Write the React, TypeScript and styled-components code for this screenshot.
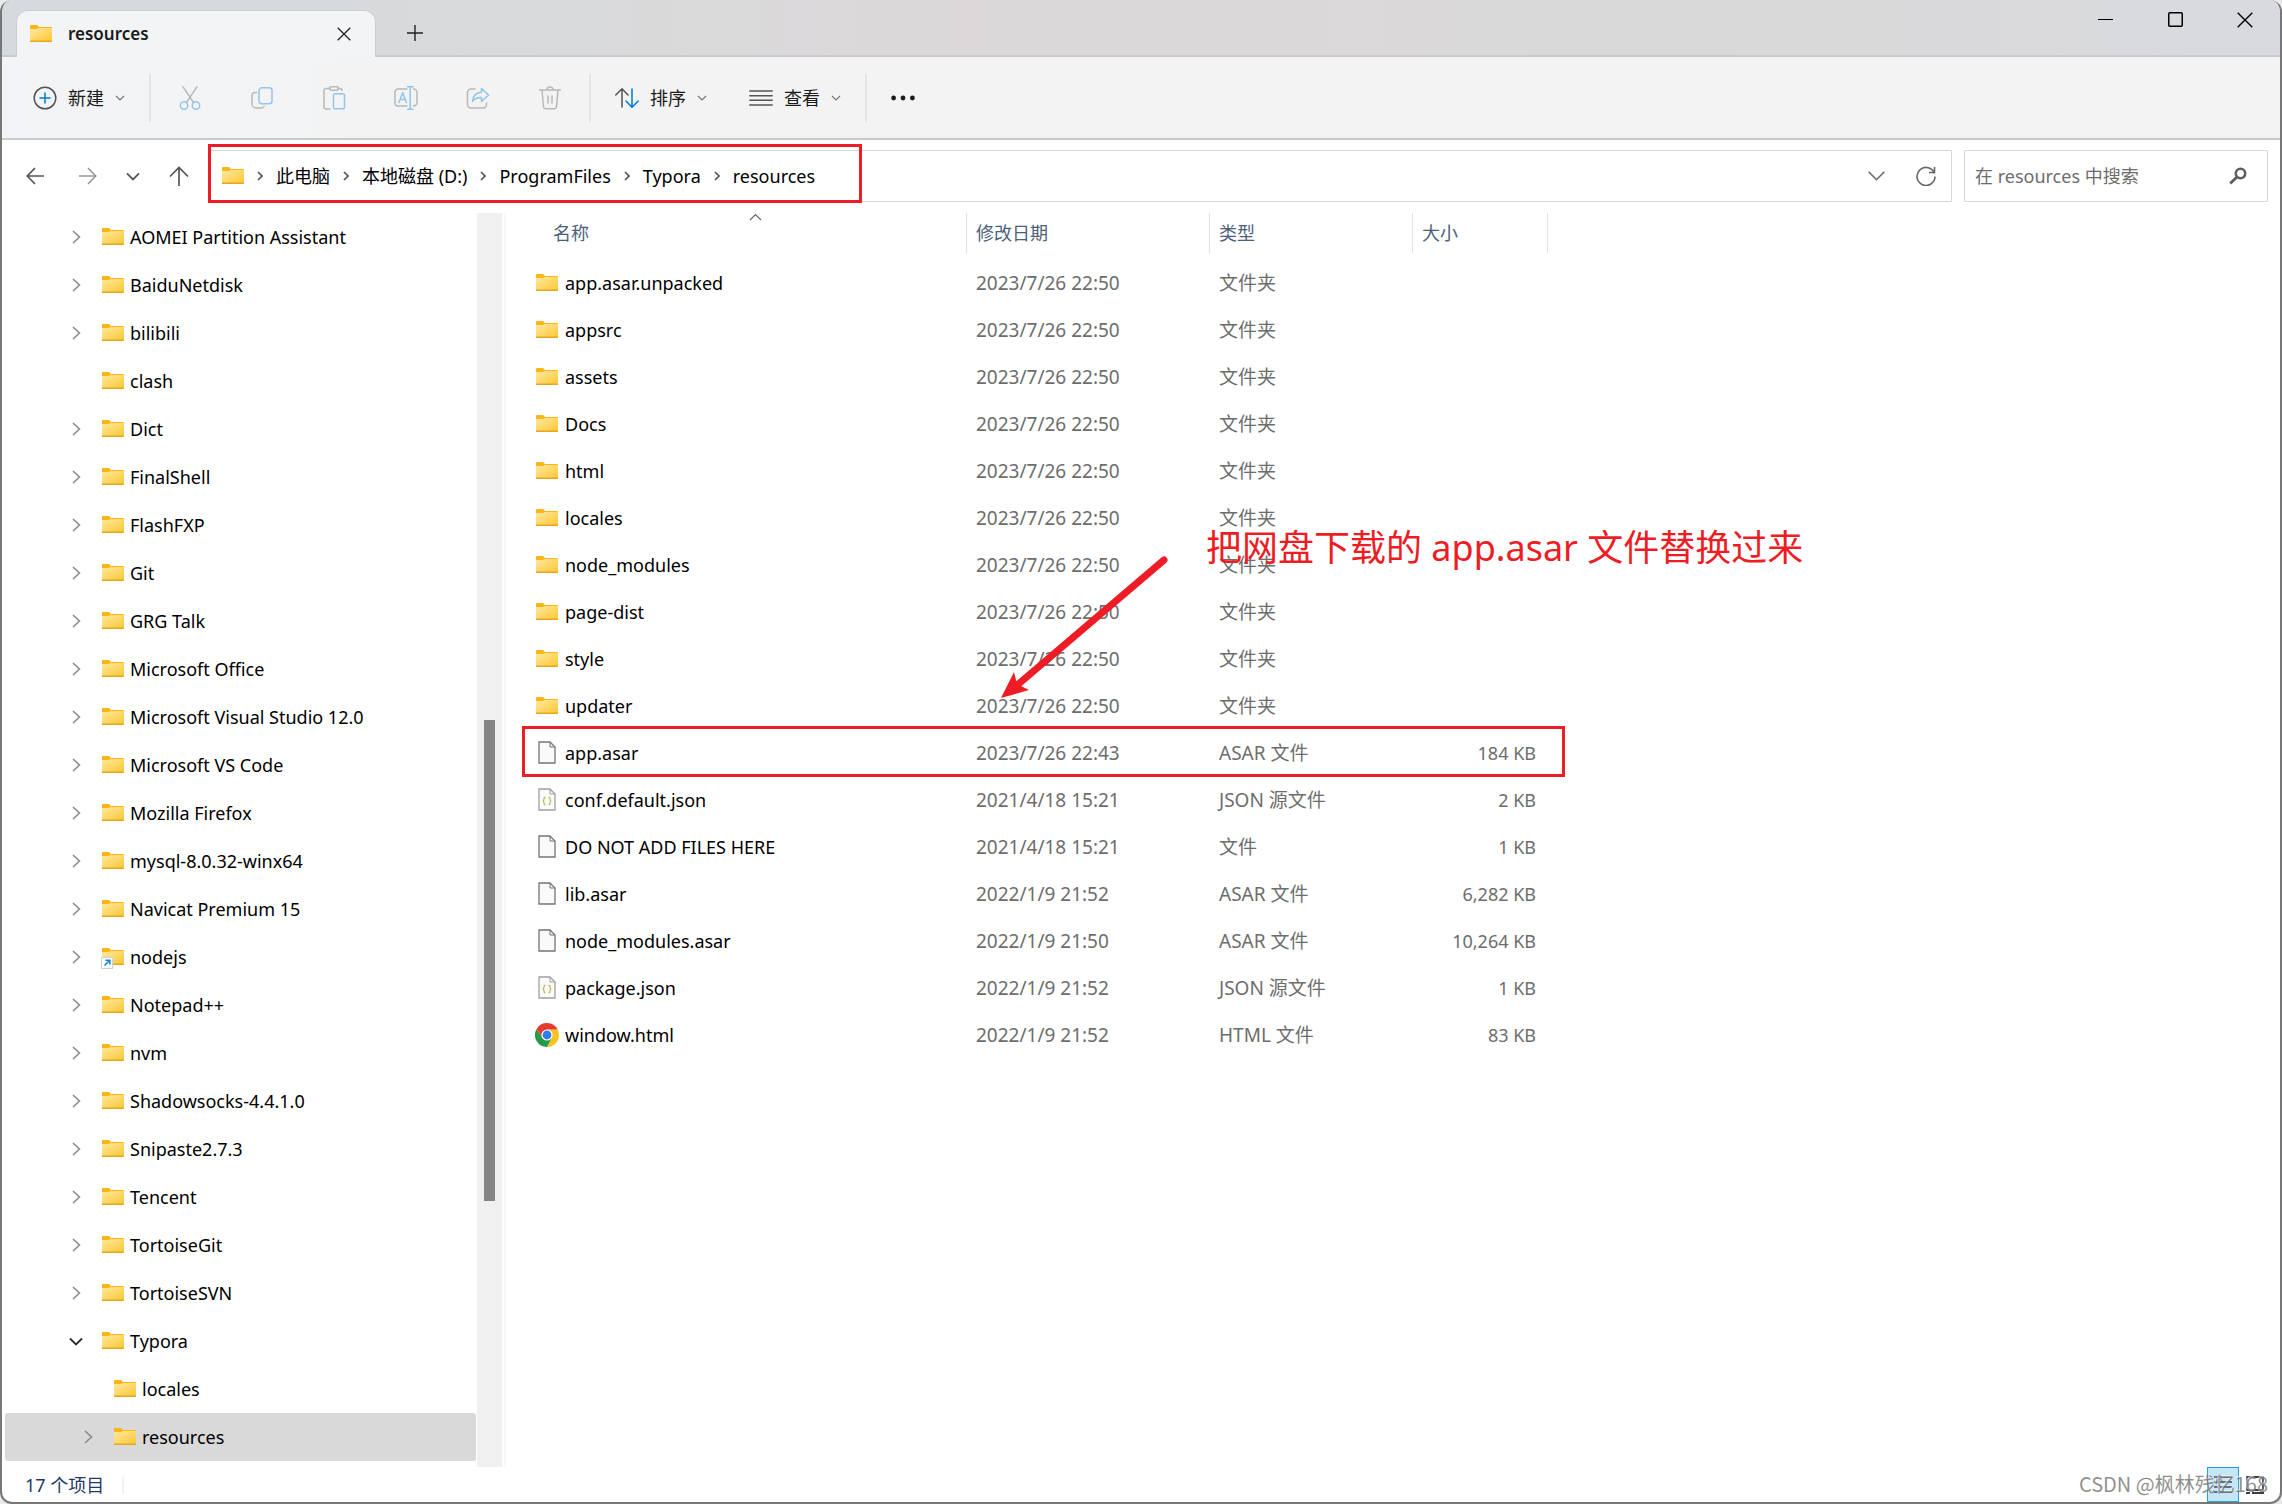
import React from "react";
import styled, { createGlobalStyle, css } from "styled-components";

const FONT = `"Noto Sans", "Noto Sans CJK SC", sans-serif`;
const RED = "#ee1c25";

const GlobalStyle = createGlobalStyle`
  *, *::before, *::after { box-sizing: border-box; }
  body {
    margin: 0;
    background: #e9e9e9;
    font-family: ${FONT};
    font-size: 18px;
    line-height: 24px;
    color: #000;
  }
  button, input { font: inherit; color: inherit; }
  ul, ol { list-style: none; margin: 0; padding: 0; }
`;

const plainButton = css`
  display: flex;
  align-items: center;
  padding: 0;
  border: 0;
  background: transparent;
  text-align: left;
`;

const Window = styled.div`
  position: relative;
  display: flex;
  flex-direction: column;
  height: 100vh;
  min-height: 900px;
  overflow: hidden;
  background: #fff;
  border: 2px solid #777;
  border-top: 0;
  border-radius: 12px;
`;

/* ---------- title bar ---------- */

const TitleBar = styled.header`
  display: flex;
  flex: none;
  height: 57px;
  padding-left: 14px;
  border-bottom: 2px solid #cbcacd;
  background: linear-gradient(90deg, #d5dadf 0%, #d8dadb 22%, #dcd8da 42%, #d9d9d9 78%, #d9dadf 100%);
`;

const Tab = styled.div`
  display: flex;
  align-items: center;
  align-self: flex-start;
  width: 360px;
  height: 47px;
  margin-top: 10px;
  padding: 0 19px 0 13px;
  border: 1px solid #cdced2;
  border-bottom: 0;
  border-radius: 12px 12px 0 0;
  background: #f3f4f6;
`;

const TabTitle = styled.span`
  flex: 1;
  padding-left: 16px;
  font-size: 17px;
  font-weight: 600;
  color: #1b1b1b;
`;

const GlyphButton = styled.button`
  ${plainButton}
  justify-content: center;
  width: 24px;
  height: 24px;
`;

const NewTab = styled(GlyphButton)`
  width: 78px;
  height: 46px;
  margin-top: 10px;
`;

const Controls = styled.div`
  display: flex;
  margin-left: auto;
`;

const ControlButton = styled.button`
  ${plainButton}
  justify-content: center;
  width: 70px;
  height: 39px;
`;

/* ---------- command bar ---------- */

const CommandBar = styled.div`
  display: flex;
  flex: none;
  align-items: center;
  height: 83px;
  padding-left: 10px;
  border-bottom: 2px solid #c9c8ca;
  background: linear-gradient(90deg, #f2f4f7 0%, #f3f3f3 20%, #f3f3f3 100%);
`;

const CommandButton = styled.button`
  ${plainButton}
  height: 48px;
  padding: 0 21px;
  gap: 11px;
  color: #1b1b1b;
`;

const CommandIcon = styled.button`
  ${plainButton}
  justify-content: center;
  width: 72px;
  height: 48px;
`;

const Divider = styled.span`
  width: 2px;
  height: 48px;
  margin: 0 3px;
  background: #e3e3e4;
`;

/* ---------- address row ---------- */

const AddressRow = styled.div`
  display: flex;
  flex: none;
  height: 73px;
  padding: 10px 12px 11px 6px;
`;

const NavButton = styled.button<{ $width: number }>`
  ${plainButton}
  justify-content: center;
  width: ${(p) => p.$width}px;
`;

const AddressField = styled.div`
  position: relative;
  display: flex;
  flex: 1;
  align-items: center;
  margin: 0 12px 0 3px;
  padding: 0 13px 0 11px;
  border: 1px solid #d9d9d9;
`;

const Crumbs = styled.ol`
  display: flex;
  flex: 1;
  align-items: center;
`;

const Crumb = styled.li`
  display: flex;
  align-items: center;
`;

const CrumbLink = styled.a`
  color: #000;
  text-decoration: none;
  white-space: nowrap;
`;

const CrumbChevron = styled.svg`
  margin: 0 13px;
`;

const CrumbHighlight = styled.span`
  position: absolute;
  left: -3px;
  top: -7px;
  width: 654px;
  height: 59px;
  border: 3px solid ${RED};
  pointer-events: none;
`;

const FieldButton = styled(GlyphButton)`
  margin-left: 26px;
`;

const SearchField = styled.label`
  display: flex;
  align-items: center;
  width: 304px;
  padding: 0 20px 0 10px;
  border: 1px solid #d9d9d9;
`;

const SearchInput = styled.input`
  flex: 1;
  min-width: 0;
  padding: 0;
  border: 0;
  outline: 0;
  background: transparent;
  &::placeholder { color: #6d6d6d; opacity: 1; }
`;

/* ---------- body ---------- */

const Body = styled.div`
  display: flex;
  flex: 1;
  min-height: 0;
`;

const Tree = styled.nav`
  flex: none;
  width: 475px;
  padding: 0 1px 0 3px;
  overflow: hidden;
`;

const TreeRow = styled.button<{ $depth: number; $selected?: boolean }>`
  ${plainButton}
  width: 100%;
  height: 48px;
  padding-left: ${(p) => 61 + p.$depth * 12}px;
  border-radius: 3px;
  background: ${(p) => (p.$selected ? "#d9d9d9" : "transparent")};
`;

const TreeChevron = styled.span`
  display: flex;
  justify-content: center;
  width: 20px;
  margin-right: 16px;
`;

const TreeLabel = styled.span`
  padding-left: 6px;
  white-space: nowrap;
`;

const ScrollTrack = styled.div`
  flex: none;
  width: 25px;
  background: #f0f0f0;
`;

const ScrollThumb = styled.div`
  width: 11px;
  height: 481px;
  margin: 507px 0 0 7px;
  background: #858585;
`;

const Files = styled.main`
  position: relative;
  flex: 1;
  min-width: 0;
  margin-left: 2px;
  border-left: 2px solid #f7f7f7;
`;

const FileTable = styled.table`
  width: 1042px;
  table-layout: fixed;
  border-collapse: collapse;
`;

const HeadCell = styled.th`
  height: 46px;
  padding: 0 0 6px;
  font-weight: 400;
  text-align: left;
`;

const HeadLabel = styled.div<{ $indent: number }>`
  position: relative;
  height: 40px;
  padding-left: ${(p) => p.$indent}px;
  line-height: 40px;
  border-right: 1px solid #e2e2e2;
  color: #4c607a;
`;

const SortMark = styled.svg`
  position: absolute;
  left: 243px;
  top: 0;
`;

const Cell = styled.td<{ $align?: string }>`
  height: 47px;
  padding: 0 12px 0 9px;
  font-size: ${(p) => (p.$align ? 18 : 19)}px;
  text-align: ${(p) => p.$align || "left"};
  white-space: nowrap;
  color: #6d6d6d;
`;

const NameCell = styled(Cell)`
  padding-left: 29px;
  font-size: 18px;
  color: #000;
`;

const NameLine = styled.span`
  display: flex;
  align-items: center;
  gap: 6px;
`;

const IconSlot = styled.span`
  display: flex;
  justify-content: center;
  width: 24px;
`;

/* ---------- annotations ---------- */

const RowHighlight = styled.div`
  position: absolute;
  left: 16px;
  top: 513px;
  width: 1043px;
  height: 51px;
  border: 3px solid ${RED};
  pointer-events: none;
`;

const Note = styled.p`
  position: absolute;
  left: 700px;
  top: 311px;
  margin: 0;
  font-size: 36px;
  line-height: 48px;
  white-space: nowrap;
  color: ${RED};
`;

const Arrow = styled.svg`
  position: absolute;
  left: 490px;
  top: 340px;
`;

/* ---------- status bar ---------- */

const StatusBar = styled.footer`
  display: flex;
  flex: none;
  align-items: center;
  height: 35px;
  padding: 0 9px 0 23px;
`;

const StatusText = styled.span`
  padding-right: 18px;
  border-right: 2px solid #f3f3f3;
  line-height: 18px;
  color: #1f3864;
`;

const ViewButton = styled.button<{ $active?: boolean }>`
  ${plainButton}
  justify-content: center;
  width: 32px;
  height: 35px;
  border: 1px solid ${(p) => (p.$active ? "#26a0da" : "transparent")};
  background: ${(p) => (p.$active ? "#c5e6f6" : "transparent")};
`;

const ViewButtons = styled.div`
  display: flex;
  margin-left: auto;
`;

const Watermark = styled.span`
  position: absolute;
  right: 12px;
  bottom: 4px;
  font-family: "Noto Sans CJK SC", sans-serif;
  font-size: 20px;
  line-height: 28px;
  color: rgba(112, 112, 112, 0.78);
  text-shadow: -1px -1px 0 rgba(255, 255, 255, 0.6);
  pointer-events: none;
`;

/* ---------- icons ---------- */

const FolderIcon = ({ shortcut }: { shortcut?: boolean }) => (
  <svg width="22" height="22" viewBox="0 0 22 22" overflow="visible" aria-hidden="true">
    <defs>
      <linearGradient id="folderFace" x1="0" y1="0" x2="1" y2="1">
        <stop offset="0" stopColor="#ffe8a3" />
        <stop offset="1" stopColor="#fec832" />
      </linearGradient>
    </defs>
    <path d="M0 3a1 1 0 0 1 1-1h6l2 2h12a1 1 0 0 1 1 1v5H0z" fill="#f9b616" />
    <path d="M0 6h7l1.500-1H22v13H0z" fill="url(#folderFace)" />
    <path d="M0 17.500h22v1a.5.5 0 0 1-.5.5H.5a.5.5 0 0 1-.5-.5z" fill="#e8a520" />
    {shortcut && (
      <g>
        <rect x="-.5" y="11.500" width="11" height="11" fill="#fff" stroke="#c9d3e6" />
        <path d="M2.500 19.500 7.500 14.500M3.500 14.200H7.800V18.500" fill="none" stroke="#1183d8" strokeWidth="1.500" />
      </g>
    )}
  </svg>
);

const FileIcon = ({ json }: { json?: boolean }) => (
  <svg width="18" height="23" viewBox="0 0 18 23" fill="none" aria-hidden="true">
    <path d="M1 1h11l5 5v16H1z" fill="#fafafa" stroke={json ? "#a0a0a0" : "#757575"} strokeWidth="1.300" />
    <path d="M12 1v5h5" stroke={json ? "#a0a0a0" : "#757575"} />
    {json && (
      <path
        d="M7.500 9c-1.500 0-1.500.6-1.500 1.800 0 1.400 0 2-1.200 2.200C6 13.200 6 14 6 15.300 6 16.500 6 17 7.500 17M10.500 9c1.500 0 1.500.6 1.500 1.800 0 1.400 0 2 1.200 2.200-1.200.2-1.200 1-1.200 2.300 0 1.200 0 1.700-1.500 1.700"
        stroke="#b9b84a"
        strokeWidth="1.200"
      />
    )}
  </svg>
);

const ChromeIcon = () => (
  <svg width="24" height="24" viewBox="0 0 24 24" aria-hidden="true">
    <path d="M12 6.500H22.650A12 12 0 0 1 12 24L16.800 14.700z" fill="#fcc31e" />
    <path d="M7.200 14.700 1.600 6A12 12 0 0 0 12 24l4.800-9.300z" fill="#229a48" />
    <path d="M12 6.500H22.650A12 12 0 0 0 1.600 6l5.600 8.700z" fill="#e33b2e" />
    <circle cx="12" cy="12" r="5.600" fill="#fff" />
    <circle cx="12" cy="12" r="4.400" fill="#2f7cf0" />
  </svg>
);

const SmallChevron = () => (
  <svg width="10" height="6" viewBox="0 0 10 6" fill="none" stroke="#777" strokeWidth="1.200" aria-hidden="true">
    <path d="m1 1 4 4 4-4" />
  </svg>
);

const RightChevron = () => (
  <svg width="9" height="14" viewBox="0 0 9 14" fill="none" stroke="#8b8b8b" strokeWidth="1.600" aria-hidden="true">
    <path d="m1 1 6.500 6L1 13" />
  </svg>
);

const OpenChevron = () => (
  <svg width="14" height="9" viewBox="0 0 14 9" fill="none" stroke="#2b2b2b" strokeWidth="1.800" aria-hidden="true">
    <path d="m1 1.500 6 6 6-6" />
  </svg>
);

const GREY = "#b9b9b9";
const BLUE = "#93c5ec";

const Icon24 = ({ children }: { children: React.ReactNode }) => (
  <svg
    width="24"
    height="24"
    viewBox="0 0 24 24"
    fill="none"
    strokeWidth="1.500"
    strokeLinecap="round"
    strokeLinejoin="round"
    aria-hidden="true"
  >
    {children}
  </svg>
);

const commandIcons = [
  {
    label: "剪切",
    icon: (
      <Icon24>
        <path d="M5 .8 15.600 16.500M19 .8 8.400 16.500" stroke={GREY} />
        <circle cx="6" cy="19.500" r="3.700" stroke={BLUE} />
        <circle cx="18" cy="19.500" r="3.700" stroke={BLUE} />
      </Icon24>
    ),
  },
  {
    label: "复制",
    icon: (
      <Icon24>
        <path d="M6.500 6.500H5a3 3 0 0 0-3 3V18a4 4 0 0 0 4 4h5.500a3 3 0 0 0 2.500-1.500" stroke={GREY} />
        <rect x="9" y="1.800" width="13" height="16" rx="3" stroke={BLUE} />
      </Icon24>
    ),
  },
  {
    label: "粘贴",
    icon: (
      <Icon24>
        <path d="M8 2.500H4a2 2 0 0 0-2 2V21a2 2 0 0 0 2 2h4M16 2.500h2a2 2 0 0 1 2 2" stroke={GREY} />
        <rect x="7.500" y=".8" width="9" height="3.500" rx="1.700" stroke={GREY} />
        <rect x="11.500" y="7.800" width="11" height="15" rx="1.500" stroke={BLUE} />
      </Icon24>
    ),
  },
  {
    label: "重命名",
    icon: (
      <Icon24>
        <path d="M13 3H4a3 3 0 0 0-3 3v11a3 3 0 0 0 3 3h9M19.500 3a3.500 3.500 0 0 1 3.500 3.500v10a3.500 3.500 0 0 1-3.500 3.500" stroke={GREY} />
        <path d="M5 16.500 8.700 6.500l3.700 10M6.300 13.500h4.800M13.500.8h5.500M16.200.8v22.400M13.500 23.200h5.500" stroke={BLUE} />
      </Icon24>
    ),
  },
  {
    label: "共享",
    icon: (
      <Icon24>
        <path d="M9 3H5a3.500 3.500 0 0 0-3.500 3.500v12A3.500 3.500 0 0 0 5 22h12a3.500 3.500 0 0 0 3.500-3.500V17" stroke={GREY} />
        <path d="M15.500 2.500 22.500 9l-7 6.500v-4c-4.500-.2-7 1-9 4 .3-5.500 3.500-8.800 9-9.200z" stroke={BLUE} />
      </Icon24>
    ),
  },
  {
    label: "删除",
    icon: (
      <Icon24>
        <path d="M1.500 4h21M9 4c0-4 6-4 6 0M4 4l1.500 16.500A2.500 2.500 0 0 0 8 22.800h8a2.500 2.500 0 0 0 2.500-2.300L20 4M10 10v7M14 10v7" stroke={GREY} />
      </Icon24>
    ),
  },
];

/* ---------- data ---------- */

type TreeItem = { name: string; depth?: number; leaf?: boolean; open?: boolean; shortcut?: boolean; selected?: boolean };

const tree: TreeItem[] = [
  { name: "AOMEI Partition Assistant" },
  { name: "BaiduNetdisk" },
  { name: "bilibili" },
  { name: "clash", leaf: true },
  { name: "Dict" },
  { name: "FinalShell" },
  { name: "FlashFXP" },
  { name: "Git" },
  { name: "GRG Talk" },
  { name: "Microsoft Office" },
  { name: "Microsoft Visual Studio 12.0" },
  { name: "Microsoft VS Code" },
  { name: "Mozilla Firefox" },
  { name: "mysql-8.0.32-winx64" },
  { name: "Navicat Premium 15" },
  { name: "nodejs", shortcut: true },
  { name: "Notepad++" },
  { name: "nvm" },
  { name: "Shadowsocks-4.4.1.0" },
  { name: "Snipaste2.7.3" },
  { name: "Tencent" },
  { name: "TortoiseGit" },
  { name: "TortoiseSVN" },
  { name: "Typora", open: true },
  { name: "locales", depth: 1, leaf: true },
  { name: "resources", depth: 1, selected: true },
];

type FileKind = "folder" | "file" | "json" | "chrome";
type FileItem = [kind: FileKind, name: string, date: string, type: string, size: string];

const folder = (name: string): FileItem => ["folder", name, "2023/7/26 22:50", "文件夹", ""];

const files: FileItem[] = [
  ...["app.asar.unpacked", "appsrc", "assets", "Docs", "html", "locales", "node_modules", "page-dist", "style", "updater"].map(folder),
  ["file", "app.asar", "2023/7/26 22:43", "ASAR 文件", "184 KB"],
  ["json", "conf.default.json", "2021/4/18 15:21", "JSON 源文件", "2 KB"],
  ["file", "DO NOT ADD FILES HERE", "2021/4/18 15:21", "文件", "1 KB"],
  ["file", "lib.asar", "2022/1/9 21:52", "ASAR 文件", "6,282 KB"],
  ["file", "node_modules.asar", "2022/1/9 21:50", "ASAR 文件", "10,264 KB"],
  ["json", "package.json", "2022/1/9 21:52", "JSON 源文件", "1 KB"],
  ["chrome", "window.html", "2022/1/9 21:52", "HTML 文件", "83 KB"],
];

const kindIcon: Record<FileKind, React.ReactNode> = {
  folder: <FolderIcon />,
  file: <FileIcon />,
  json: <FileIcon json />,
  chrome: <ChromeIcon />,
};

const crumbs = ["此电脑", "本地磁盘 (D:)", "ProgramFiles", "Typora", "resources"];

export default function App() {
  return (
    <>
      <GlobalStyle />
      <Window>
        <TitleBar>
          <Tab>
            <FolderIcon />
            <TabTitle>resources</TabTitle>
            <GlyphButton aria-label="关闭选项卡">
              <svg width="14" height="14" viewBox="0 0 14 14" stroke="#222" strokeWidth="1.300">
                <path d="m.7.7 12.600 12.600M13.300.7.7 13.300" />
              </svg>
            </GlyphButton>
          </Tab>
          <NewTab aria-label="新建选项卡">
            <svg width="16" height="16" viewBox="0 0 16 16" stroke="#222" strokeWidth="1.400">
              <path d="M8 0v16M0 8h16" />
            </svg>
          </NewTab>
          <Controls>
            <ControlButton aria-label="最小化">
              <svg width="15" height="15" viewBox="0 0 15 15">
                <path d="M0 7h15v1H0z" fill="#000" />
              </svg>
            </ControlButton>
            <ControlButton aria-label="最大化">
              <svg width="15" height="15" viewBox="0 0 15 15" fill="none">
                <rect x=".75" y=".75" width="13.500" height="13.500" rx="1" stroke="#000" strokeWidth="1.500" />
              </svg>
            </ControlButton>
            <ControlButton aria-label="关闭">
              <svg width="16" height="16" viewBox="0 0 16 16" stroke="#000" strokeWidth="1.400">
                <path d="m.7.7 14.600 14.600M15.300.7.7 15.300" />
              </svg>
            </ControlButton>
          </Controls>
        </TitleBar>

        <CommandBar role="toolbar">
          <CommandButton>
            <Icon24>
              <circle cx="12" cy="12" r="10.800" stroke="#555" />
              <path d="M12 7v10M7 12h10" stroke="#0078d4" />
            </Icon24>
            新建
            <SmallChevron />
          </CommandButton>
          <Divider />
          {commandIcons.map((c) => (
            <CommandIcon key={c.label} aria-label={c.label} disabled>
              {c.icon}
            </CommandIcon>
          ))}
          <Divider />
          <CommandButton>
            <Icon24>
              <path d="M7 21V3M.8 9 7 2.800 13 9" stroke="#555" />
              <path d="M17 3v18M11 15l6 6.200 6.200-6.200" stroke="#0078d4" />
            </Icon24>
            排序
            <SmallChevron />
          </CommandButton>
          <CommandButton>
            <Icon24>
              <path d="M.8 5h22.400M.8 9.700h22.400M.8 14.300h22.400M.8 19h22.400" stroke="#555" />
            </Icon24>
            查看
            <SmallChevron />
          </CommandButton>
          <Divider />
          <CommandButton aria-label="查看更多">
            <svg width="24" height="6" viewBox="0 0 24 6" fill="#1b1b1b">
              <circle cx="2.600" cy="3" r="2.400" />
              <circle cx="12" cy="3" r="2.400" />
              <circle cx="21.400" cy="3" r="2.400" />
            </svg>
          </CommandButton>
        </CommandBar>

        <AddressRow>
          <NavButton $width={53} aria-label="后退">
            <svg width="18" height="18" viewBox="0 0 18 18" fill="none" stroke="#555" strokeWidth="1.700">
              <path d="M18 9H1.500M9 1 1.300 9 9 17" />
            </svg>
          </NavButton>
          <NavButton $width={53} aria-label="前进">
            <svg width="18" height="18" viewBox="0 0 18 18" fill="none" stroke="#9a9a9a" strokeWidth="1.700">
              <path d="M0 9h16.500M9 1l7.700 8L9 17" />
            </svg>
          </NavButton>
          <NavButton $width={37} aria-label="最近浏览的位置">
            <svg width="14" height="9" viewBox="0 0 14 9" fill="none" stroke="#555" strokeWidth="1.800">
              <path d="m1 1.300 6 6.200 6-6.200" />
            </svg>
          </NavButton>
          <NavButton $width={56} aria-label="上移">
            <svg width="20" height="20" viewBox="0 0 20 20" fill="none" stroke="#555" strokeWidth="1.700">
              <path d="M10 20V1.500M1 10.500l9-9 9 9" />
            </svg>
          </NavButton>

          <AddressField>
            <FolderIcon />
            <Crumbs>
              {crumbs.map((c) => (
                <Crumb key={c}>
                  <CrumbChevron width="6" height="10" viewBox="0 0 6 10" fill="none" stroke="#555" strokeWidth="1.700">
                    <path d="m1 1 4 4-4 4" />
                  </CrumbChevron>
                  <CrumbLink href="#">{c}</CrumbLink>
                </Crumb>
              ))}
            </Crumbs>
            <GlyphButton aria-label="以前的位置">
              <svg width="17" height="10" viewBox="0 0 17 10" fill="none" stroke="#666" strokeWidth="1.500">
                <path d="m.7.8 7.800 7.900L16.300.8" />
              </svg>
            </GlyphButton>
            <FieldButton aria-label="刷新">
              <svg width="20" height="20" viewBox="0 0 20 20" fill="none" stroke="#666" strokeWidth="1.600">
                <path d="M18.500 7.500A9 9 0 1 0 19 10.500M18.500 1v5.500H13" />
              </svg>
            </FieldButton>
            <CrumbHighlight />
          </AddressField>

          <SearchField>
            <SearchInput type="search" placeholder="在 resources 中搜索" aria-label="搜索" />
            <svg width="18" height="18" viewBox="0 0 18 18" fill="none" stroke="#5e5e5e" aria-hidden="true">
              <circle cx="11.500" cy="6.500" r="4.700" strokeWidth="2.600" />
              <path d="M8 10 1.200 16.500" strokeWidth="2.800" />
            </svg>
          </SearchField>
        </AddressRow>

        <Body>
          <Tree aria-label="导航窗格">
            <ul>
              {tree.map((t) => (
                <li key={t.name}>
                  <TreeRow $depth={t.depth || 0} $selected={t.selected}>
                    <TreeChevron>{t.leaf ? null : t.open ? <OpenChevron /> : <RightChevron />}</TreeChevron>
                    <FolderIcon shortcut={t.shortcut} />
                    <TreeLabel>{t.name}</TreeLabel>
                  </TreeRow>
                </li>
              ))}
            </ul>
          </Tree>
          <ScrollTrack>
            <ScrollThumb />
          </ScrollTrack>
          <Files>
            <FileTable>
              <colgroup>
                <col width="461" />
                <col width="243" />
                <col width="203" />
                <col width="135" />
              </colgroup>
              <thead>
                <tr>
                  <HeadCell>
                    <HeadLabel $indent={47}>
                      名称
                      <SortMark width="13" height="8" viewBox="0 0 13 8" fill="none" stroke="#666" strokeWidth="1.200">
                        <path d="m1 7 5.500-5.500L12 7" />
                      </SortMark>
                    </HeadLabel>
                  </HeadCell>
                  <HeadCell>
                    <HeadLabel $indent={9}>修改日期</HeadLabel>
                  </HeadCell>
                  <HeadCell>
                    <HeadLabel $indent={9}>类型</HeadLabel>
                  </HeadCell>
                  <HeadCell>
                    <HeadLabel $indent={9}>大小</HeadLabel>
                  </HeadCell>
                </tr>
              </thead>
              <tbody>
                {files.map(([kind, name, date, type, size]) => (
                  <tr key={name}>
                    <NameCell>
                      <NameLine>
                        <IconSlot>{kindIcon[kind]}</IconSlot>
                        {name}
                      </NameLine>
                    </NameCell>
                    <Cell>{date}</Cell>
                    <Cell>{type}</Cell>
                    <Cell $align="right">{size}</Cell>
                  </tr>
                ))}
              </tbody>
            </FileTable>
            <RowHighlight />
            <Arrow width="180" height="155" viewBox="0 0 180 155" fill="none">
              <path d="M168 7 20 133" stroke={RED} strokeWidth="7" strokeLinecap="round" />
              <path d="M5 145 18 119 21 131 33 137z" fill={RED} />
            </Arrow>
            <Note>把网盘下载的 app.asar 文件替换过来</Note>
          </Files>
        </Body>

        <StatusBar>
          <StatusText>17 个项目</StatusText>
          <ViewButtons>
            <ViewButton $active aria-label="详细信息">
              <svg width="18" height="17" viewBox="0 0 18 17" stroke="#000" strokeWidth="1.200">
                <path d="M0 1h4M6 1h12M0 6h4M6 6h12M0 11h4M6 11h12M0 16h4M6 16h12" />
              </svg>
            </ViewButton>
            <ViewButton aria-label="大缩略图">
              <svg width="18" height="18" viewBox="0 0 18 18" fill="none" stroke="#000" strokeWidth="1.300">
                <path d="M1 1h16v13H1zM0 17h4M6 17h12" />
              </svg>
            </ViewButton>
          </ViewButtons>
        </StatusBar>
        <Watermark>CSDN @枫林残忆168</Watermark>
      </Window>
    </>
  );
}
